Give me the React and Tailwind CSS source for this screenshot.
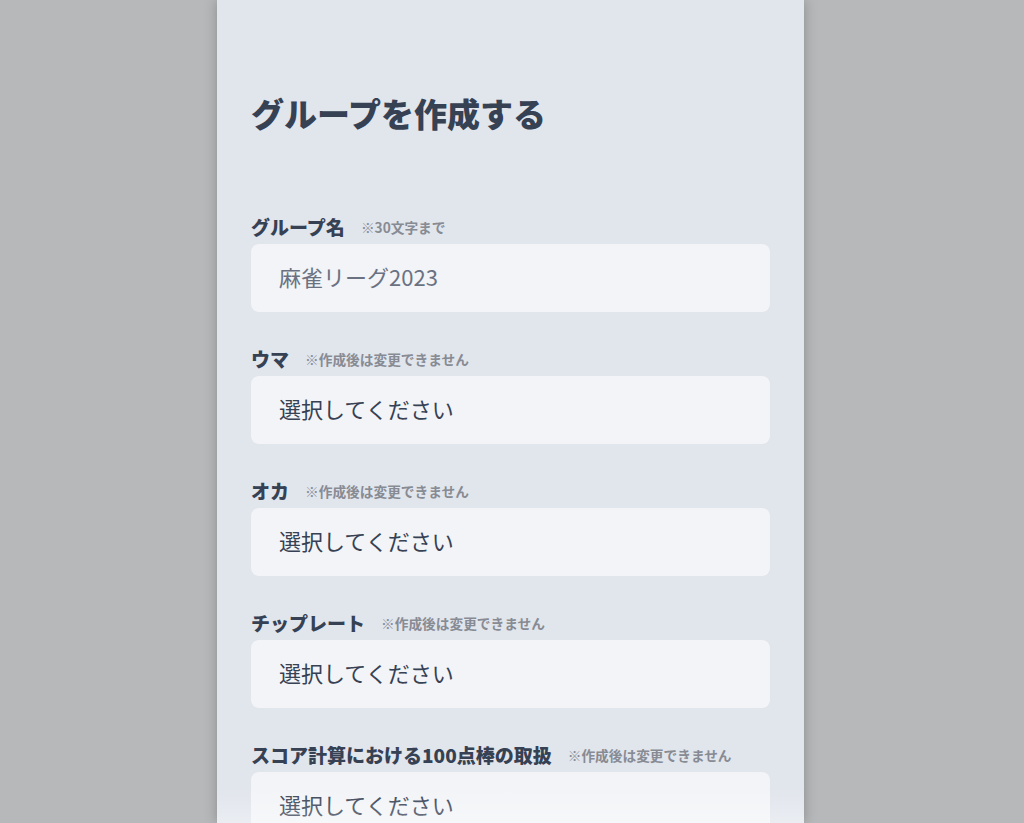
import React from "react";

const fields = [
  { label: "グループ名", hint: "※30文字まで", value: "麻雀リーグ2023", placeholder: true },
  { label: "ウマ", hint: "※作成後は変更できません", value: "選択してください" },
  { label: "オカ", hint: "※作成後は変更できません", value: "選択してください" },
  { label: "チップレート", hint: "※作成後は変更できません", value: "選択してください" },
  { label: "スコア計算における100点棒の取扱", hint: "※作成後は変更できません", value: "選択してください" },
];

const Field = ({ label, hint, value, placeholder }) => {
  return (
    <div className="mb-9">
      <div className="flex items-center h-6 mb-1 pb-[2px]">
        <span className="text-[19px] font-extrabold text-gray-700">{label}</span>
        <span className="ml-4 text-[13.7px] font-bold text-[#878b93]">{hint}</span>
      </div>
      <div className="h-[68px] rounded-lg bg-[#f2f4f7] flex items-center px-7 pb-[4px]">
        <span className={"text-[22px] " + (placeholder ? "text-gray-500" : "text-gray-700")}>{value}</span>
      </div>
    </div>
  );
};

const App = () => {
  return (
    <div
      className="relative h-[823px] overflow-hidden bg-[#b7b8ba] flex"
      style={{ fontFamily: '"Noto Sans CJK JP", "Noto Sans", sans-serif' }}
    >
      <div className="ml-[217px] w-[587px] h-full bg-[#e1e5ec] shadow-[0_0_12px_rgba(0,0,0,0.25)] px-[34px] pt-[93px]">
        <h1 className="text-[33px] leading-10 font-black text-gray-700 mb-[83px]">グループを作成する</h1>
        {fields.map((f) => (
          <Field key={f.label} {...f} />
        ))}
      </div>
      {/* bottom fade */}
      <div className="absolute left-[217px] w-[587px] bottom-0 h-9 bg-gradient-to-t from-white/30 to-transparent pointer-events-none"></div>
    </div>
  );
};

export default App;
